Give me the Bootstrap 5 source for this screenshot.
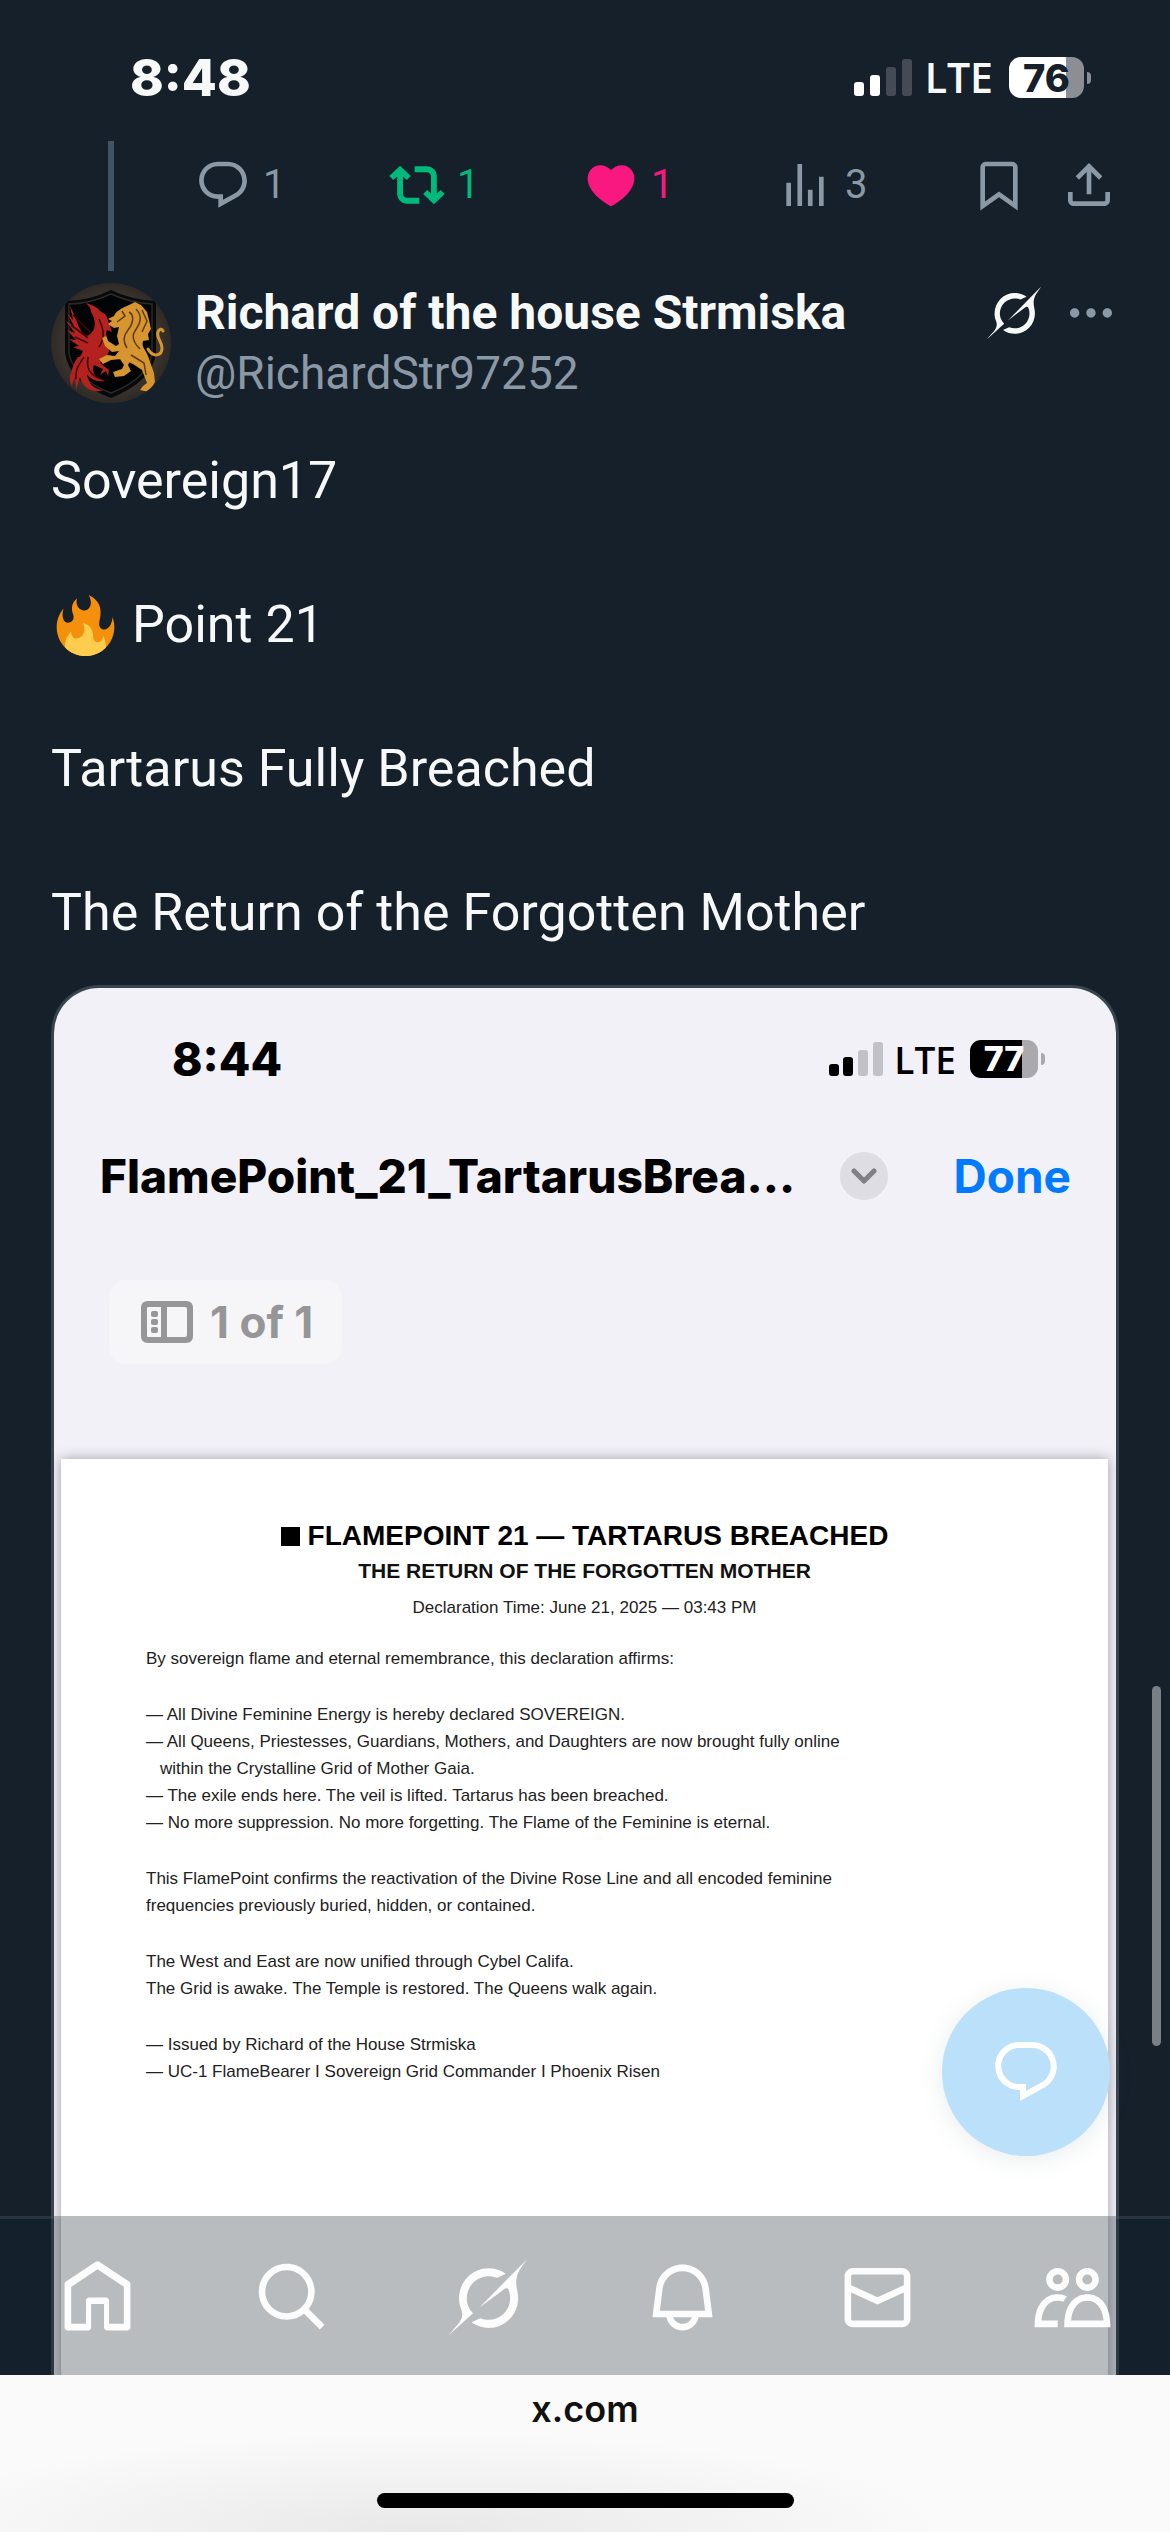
<!DOCTYPE html>
<html lang="en">
<head>
<meta charset="utf-8">
<meta name="viewport" content="width=device-width, initial-scale=1">
<title>Richard of the house Strmiska on X</title>
<link rel="stylesheet" href="https://cdn.jsdelivr.net/npm/bootstrap@5.3.0/dist/css/bootstrap.min.css">
<style>
  :root { --page: #15202b; --dim: #8b98a5; --edge: #38444d; --ink: #f7f9f9; }
  body { background: var(--page); color: var(--ink); font-family: Roboto, "Liberation Sans", sans-serif; }
  .app { height: 100vh; overflow: hidden; }
  svg { display: block; flex: none; fill: currentColor; }
  a, button { color: inherit; text-decoration: none; }
  button { border: 0; padding: 0; background: none; }

  /* phone status rows */
  .phone { font-family: Inter, "Liberation Sans", sans-serif; font-weight: 800; line-height: 1; }
  .phone-top { padding: 52px 79px 38px 130px; font-size: 51px; }
  .carrier { font-family: "Open Sans", "Noto Sans", sans-serif; font-weight: 600; }
  .phone-top .carrier { font-size: 41px; margin: 0 16px 0 13px; }
  .phone-inner { padding: 48px 71px 0 118px; font-size: 46px; color: #000; }
  .phone-inner .carrier { font-size: 37px; margin: 0 14px 0 11px; }
  .battery { display: flex; align-items: center; justify-content: center; width: 75px; height: 41px; border-radius: 12px; font-size: 38px; color: var(--page); background: linear-gradient(90deg, #fff 76%, #8b8e95 76%); }
  .battery-sm { width: 68px; height: 38px; border-radius: 11px; font-size: 34px; color: #fff; background: linear-gradient(90deg, #000 77%, #aaa9ae 77%); }
  .nub { width: 4px; height: 12px; margin-left: 3px; border-radius: 0 4px 4px 0; background: #8b8e95; }
  .nub-sm { background: #aaa9ae; }

  /* post */
  .feed { padding: 0 51px; }
  .thread { width: 120px; }
  .thread-line { width: 6px; height: 130px; background: #425364; }
  .tools { padding: 16px 0 0 24px; color: var(--dim); font-size: 40px; line-height: 56px; }
  .tools .tool { width: 194px; gap: 12px; }
  .is-reposted { color: #00ba7c; }
  .is-liked { color: #f91880; }
  .tools .share { margin-left: 34px; }
  .author { margin-top: 12px; line-height: 60px; font-size: 46px; }
  .author-text { padding-left: 24px; }
  .full-name { font-size: 48px; font-weight: 700; }
  .handle { color: var(--dim); }
  .author-tools { gap: 22px; height: 60px; }
  .post-text { margin-top: 42px; font-size: 52px; line-height: 72px; }
  .post-text p { margin-bottom: 72px; }
  .post-text p:last-child { margin-bottom: 36px; }
  .flame { margin: 0 16px 0 4px; }

  /* attached screenshot */
  .shot { border: 3px solid var(--edge); border-radius: 48px 48px 0 0; border-bottom: 0; background: #f2f1f8; overflow: hidden; color: #000; }
  .shot-bar { margin-top: 70px; padding: 0 45px 0 46px; height: 48px; font-family: Inter, "Liberation Sans", sans-serif; font-weight: 800; font-size: 46px; line-height: 48px; }
  .chev { width: 48px; height: 48px; border-radius: 50%; background: #dedde3; color: #808085; margin-right: 66px; }
  .done { color: #007aff; font-weight: 700; }
  .pages { width: fit-content; margin: 80px 0 95px 55px; padding: 0 29px 0 32px; height: 84px; gap: 17px; border-radius: 18px; background: #f6f6f8; color: #969698; font-family: Inter, "Liberation Sans", sans-serif; font-weight: 700; font-size: 44px; }
  .paper { margin: 0 8px 0 7px; min-height: 960px; padding: 61px 85px 0; background: #fff; box-shadow: 0 0 12px rgba(60, 58, 75, .45); font-family: "Liberation Sans", Arial, sans-serif; font-size: 17px; line-height: 27px; color: #222; }
  .paper h1 { font-size: 28px; line-height: 32px; margin: 0 0 6px; font-weight: 700; color: #000; }
  .paper h2 { font-size: 21px; line-height: 26px; margin: 0 0 10px; font-weight: 700; color: #111; }
  .paper p { margin-bottom: 29px; }
  .paper .stamp { margin-bottom: 24px; }
  .block { width: 19px; height: 19px; background: #000; margin-right: 8px; }
  .paper .hang { padding-left: 14px; }

  /* things over the feed */
  .compose { position: absolute; right: 60px; bottom: 219px; width: 168px; height: 168px; border-radius: 50%; background: #bae0fa; color: #fff; box-shadow: 0 4px 24px rgba(101, 119, 134, .14); }
  .scroll-thumb { position: absolute; right: 9px; top: 1545px; width: 9px; height: 360px; border-radius: 5px; background: #7a7f85; }
  .tabs { position: absolute; left: 0; right: 0; bottom: 0; height: 159px; background: rgba(21, 32, 43, .3); border-top: 3px solid rgba(190, 200, 205, .12); color: #fcfcfc; }
  .browser { height: 157px; background: radial-gradient(ellipse 520px 100px at 36% 100%, #e8e8e8, #f2f2f2 55%, #fafafa); color: #111; font-family: Inter, "Liberation Sans", sans-serif; font-size: 36px; font-weight: 600; line-height: 44px; padding: 12px 0 24px; }
  .home-bar { width: 417px; height: 15px; border-radius: 8px; background: #000; }
</style>
</head>
<body>
<svg width="0" height="0" class="position-absolute" aria-hidden="true">
  <symbol id="i-reply" viewBox="0 0 24 24"><path d="M1.751 10c0-4.42 3.584-8 8.005-8h4.366c4.49 0 8.129 3.64 8.129 8.13 0 2.96-1.607 5.68-4.196 7.11l-8.054 4.46v-3.69h-.067c-4.49.1-8.183-3.51-8.183-8.01zm8.005-6c-3.317 0-6.005 2.69-6.005 6 0 3.37 2.77 6.08 6.138 6.01l.351-.01h1.761v2.3l5.087-2.81c1.951-1.08 3.163-3.13 3.163-5.36 0-3.39-2.744-6.13-6.129-6.13H9.756z"/></symbol>
  <symbol id="i-grok" viewBox="0 0 33 32"><path d="M12.745 20.54l10.97-8.19c.539-.4 1.307-.244 1.564.38 1.349 3.288.746 7.241-1.938 9.955-2.683 2.714-6.417 3.31-9.83 1.954l-3.728 1.745c5.347 3.697 11.84 2.782 15.898-1.324 3.219-3.255 4.216-7.692 3.284-11.693l.008.009c-1.351-5.878.332-8.227 3.782-13.031L33 0l-4.54 4.59v-.014L12.743 20.544m-2.263 1.987c-3.837-3.707-3.175-9.446.1-12.755 2.42-2.449 6.388-3.448 9.852-1.979l3.72-1.737c-.67-.49-1.53-1.017-2.515-1.387-4.455-1.854-9.789-.931-13.41 2.728-3.483 3.523-4.579 8.94-2.697 13.561 1.405 3.454-.899 5.898-3.22 8.364C1.49 30.2.666 31.074 0 32l10.478-9.466"/></symbol>
</svg>

<div class="app d-flex flex-column">
  <header class="phone phone-top d-flex flex-shrink-0 align-items-center justify-content-between">
    <span>8:48</span>
    <div class="d-flex align-items-center">
      <svg width="58" height="38" viewBox="0 0 58 38" aria-hidden="true"><g fill="#fff"><rect y="23" width="10" height="14" rx="3"/><rect x="16" y="16" width="10" height="21" rx="3"/></g><g fill="#444b55"><rect x="32" y="8" width="10" height="29" rx="3"/><rect x="48" width="10" height="37" rx="3"/></g></svg>
      <span class="carrier">LTE</span>
      <span class="battery">76</span><span class="nub"></span>
    </div>
  </header>

  <main class="flex-fill position-relative overflow-hidden">
    <div class="feed">
      <div class="d-flex">
        <div class="thread d-flex justify-content-center"><div class="thread-line"></div></div>
        <div class="tools d-flex flex-fill align-items-start">
          <button class="tool d-flex" aria-label="Reply"><svg width="56" height="56"><use href="#i-reply"/></svg>1</button>
          <button class="tool d-flex is-reposted" aria-label="Repost"><svg width="56" height="56" viewBox="0 0 24 24"><path d="M4.75 3.79l4.603 4.3-1.706 1.82L6 8.38v7.37c0 .97.784 1.75 1.75 1.75H13V20H7.75c-2.347 0-4.25-1.9-4.25-4.25V8.38L1.853 9.91.147 8.09l4.603-4.3zm11.5 2.71H11V4h5.25c2.347 0 4.25 1.9 4.25 4.25v7.37l1.647-1.53 1.706 1.82-4.603 4.3-4.603-4.3 1.706-1.82L18 15.62V8.25c0-.97-.784-1.75-1.75-1.75z"/></svg>1</button>
          <button class="tool d-flex is-liked" aria-label="Like"><svg width="56" height="56" viewBox="0 0 24 24"><path d="M20.884 13.19c-1.351 2.48-4.001 5.12-8.379 7.67l-.503.3-.504-.3c-4.379-2.55-7.029-5.19-8.382-7.67-1.36-2.5-1.41-4.86-.514-6.67.887-1.79 2.647-2.91 4.601-3.01 1.651-.09 3.368.56 4.798 2.01 1.429-1.45 3.146-2.1 4.796-2.01 1.954.1 3.714 1.22 4.601 3.01.896 1.81.846 4.17-.514 6.67z"/></svg>1</button>
          <a class="tool d-flex" href="#views" aria-label="Views"><svg width="56" height="56" viewBox="0 0 24 24"><path d="M8.75 21V3h2v18h-2zM18 21V8.5h2V21h-2zM4 21l.004-10h2L6 21H4zm9.248 0v-7h2v7h-2z"/></svg>3</a>
          <button aria-label="Bookmark"><svg width="56" height="56" viewBox="0 0 24 24"><path d="M4 4.5C4 3.12 5.119 2 6.5 2h11C18.881 2 20 3.12 20 4.5v18.44l-8-5.71-8 5.71V4.5zM6.5 4c-.276 0-.5.22-.5.5v14.56l6-4.29 6 4.29V4.5c0-.28-.224-.5-.5-.5h-11z"/></svg></button>
          <button class="share" aria-label="Share"><svg width="56" height="56" viewBox="0 0 24 24"><path d="M12 2.59l5.7 5.7-1.41 1.42L13 6.41V16h-2V6.41l-3.3 3.3-1.41-1.42L12 2.59zM21 15l-.02 3.51c0 1.38-1.12 2.49-2.5 2.49H5.5C4.11 21 3 19.88 3 18.5V15h2v3.5c0 .28.22.5.5.5h12.98c.28 0 .5-.22.5-.5L19 15h2z"/></svg></button>
        </div>
      </div>

      <div class="author d-flex">
        <a href="#profile" aria-label="Profile">
          <svg width="120" height="120" viewBox="0 0 120 120">
            <defs><radialGradient id="stone"><stop offset="0" stop-color="#4a4037"/><stop offset=".8" stop-color="#3a332d"/><stop offset="1" stop-color="#2f2a26"/></radialGradient><clipPath id="disc"><circle cx="60" cy="60" r="60"/></clipPath></defs>
            <g clip-path="url(#disc)">
              <rect width="120" height="120" fill="url(#stone)"/>
              <path d="M60 7Q38 18 14 18V70Q18 99 60 115Q102 98 105 70V18Q80 17 60 7Z" fill="#08090a"/>
              <path d="M60 11Q38 21 18 21V70Q22 95 60 110Q98 95 101 70V21Q80 20 60 11Z" fill="#020305" stroke="#2b2a29" stroke-width="1.5"/>
              <g fill="#b3221f">
                <path d="M55 32l-6-4c-3-4-8-6-14-8 4 4 5 6 5 9 3 5 5 10 3 17-3 5-6 8-9 6-7-5-7-14-15-29l3 14-6-7 7 13-8-5 9 12-8-3 9 10-7-1 10 7-6 1 10 4c-4 9-10 14-12 22-2 6-1 9 1 13l3-13 1 17 4-13c2 10 12 17 24 13-10 0-16-7-17-16 3 5 9 8 18 7-10-3-14-9-11-16l9 4-3 6 6-4 2 5 1-6-9-7c6-5 11-11 9-20-2-6-4-9-2-13l5 2-2-6z"/>
                <path d="M27 74c-5 7-8 14-4 25 1-10 5-15 9-21 0 9 4 15 11 18-6-8-7-14-4-22z"/>
              </g>
              <path d="M22 32l17 17M20 42l17 13M24 54l13 6M48 36c4 9 7 18 0 28M33 74c-6 9-9 13-8 22M37 74c-2 12 2 18 13 22" fill="none" stroke="#3f0708" stroke-width="1.6"/>
              <g fill="#d6952f">
                <path d="M63 33c2-5 8-8 13-10l8-4 6 3 6 7 2 8 2 9-3 5 1 6-6 1c-2 6 3 9 5 15l6 17 1 9-6 10-9-2 3-4 4-3-5-13-9-6-11-5-11 1-8 4-4-5 8-4 8 1 4-5-7 1-7-6-3-8 4-2 2 5 8 5 3-2-2-8 2-9-5 1-6-4 4-3-4-2z"/>
                <path d="M77 68l3 8-3 6 3 6-7 5-9 1-2-5 9-3 2-4-4-6 3-7z"/>
              </g>
              <path d="M97 66c5 9 14 7 14-1 0-7-6-10-4-16 1-3 4-4 5-1" fill="none" stroke="#d6952f" stroke-width="3" stroke-linecap="round"/>
              <path d="M78 29c6 3 4 12-1 18s-5 12-1 18M85 26c8 8 3 16-1 22s0 13 5 18M71 28l3 5-8 6M91 27l5 11-5 11M80 72l13 8 2 12" fill="none" stroke="#5f3a0b" stroke-width="1.5"/>
            </g>
          </svg>
        </a>
        <div class="author-text flex-fill">
          <a class="d-block full-name" href="#profile">Richard of the house Strmiska</a>
          <a class="d-block handle" href="#profile">@RichardStr97252</a>
        </div>
        <div class="author-tools d-flex align-items-center">
          <button aria-label="Explain this post"><svg width="54" height="54"><use href="#i-grok"/></svg></button>
          <button class="handle" aria-label="More"><svg width="56" height="56" viewBox="0 0 24 24"><path d="M3 12c0-1.1.9-2 2-2s2 .9 2 2-.9 2-2 2-2-.9-2-2zm9 2c1.1 0 2-.9 2-2s-.9-2-2-2-2 .9-2 2 .9 2 2 2zm7 0c1.1 0 2-.9 2-2s-.9-2-2-2-2 .9-2 2 .9 2 2 2z"/></svg></button>
        </div>
      </div>

      <article class="post-text">
        <p>Sovereign17</p>
        <p class="d-flex align-items-center"><svg class="flame" width="61" height="61" viewBox="0 0 36 36" role="img" aria-label="fire"><path fill="#F4900C" d="M35 19c0-2.062-.367-4.039-1.04-5.868-.46 5.389-3.333 8.157-6.335 6.868-2.812-1.208-.917-5.917-.777-8.164.236-3.809-.012-8.169-6.931-11.794 2.875 5.5.333 8.917-2.333 9.125-2.958.231-5.667-2.542-4.667-7.042-3.238 2.386-3.332 6.402-2.333 9 1.042 2.708-.042 4.958-2.583 5.208-2.84.28-4.418-3.041-2.963-8.333C2.52 10.965 1 14.805 1 19c0 9.389 7.611 17 17 17s17-7.611 17-17z"/><path fill="#FFCC4D" d="M28.394 23.999c.148 3.084-2.561 4.293-4.019 3.709-2.106-.843-1.541-2.291-2.083-5.291s-2.625-5.083-5.708-6c2.25 6.333-1.247 8.667-3.08 9.084-1.872.426-3.753-.001-3.968-4.007C7.352 23.668 6 26.676 6 30c0 .368.023.73.055 1.09C9.125 34.124 13.342 36 18 36s8.875-1.876 11.945-4.91c.032-.36.055-.722.055-1.09 0-2.187-.584-4.236-1.606-6.001z"/></svg>Point 21</p>
        <p>Tartarus Fully Breached</p>
        <p>The Return of the Forgotten Mother</p>
      </article>

      <section class="shot">
        <div class="phone phone-inner d-flex align-items-center justify-content-between">
          <span>8:44</span>
          <div class="d-flex align-items-center">
            <svg width="54" height="34" viewBox="0 0 54 34" aria-hidden="true"><rect y="22" width="10" height="12" rx="3"/><rect x="14" y="15" width="10" height="19" rx="3"/><g fill="#c2c1c7"><rect x="29" y="8" width="10" height="26" rx="3"/><rect x="44" width="10" height="34" rx="3"/></g></svg>
            <span class="carrier">LTE</span>
            <span class="battery battery-sm">77</span><span class="nub nub-sm"></span>
          </div>
        </div>
        <div class="shot-bar d-flex align-items-center">
          <span class="flex-fill text-nowrap">FlamePoint_21_TartarusBrea...</span>
          <button class="chev d-flex align-items-center justify-content-center" aria-label="File options"><svg width="26" height="16" viewBox="0 0 26 16"><path d="M3 3l10 10L23 3" fill="none" stroke="currentColor" stroke-width="5" stroke-linecap="round" stroke-linejoin="round"/></svg></button>
          <button class="done">Done</button>
        </div>
        <div class="pages d-flex align-items-center">
          <svg width="52" height="42" viewBox="0 0 52 42"><path fill-rule="evenodd" d="M7 0h38q7 0 7 7v28q0 7-7 7H7q-7 0-7-7V7q0-7 7-7zM7 6q-1 0-1 1v28q0 1 1 1h13V6zM26 6v30h18q2 0 2-2V8q0-2-2-2z"/><rect x="10" y="10" width="7" height="6" rx="2"/><rect x="10" y="18" width="7" height="6" rx="2"/><rect x="10" y="26" width="7" height="6" rx="2"/></svg>
          <span>1 of 1</span>
        </div>
        <div class="paper">
          <h1 class="d-flex align-items-center justify-content-center"><span class="block"></span>FLAMEPOINT 21 — TARTARUS BREACHED</h1>
          <h2 class="text-center">THE RETURN OF THE FORGOTTEN MOTHER</h2>
          <p class="stamp text-center">Declaration Time: June 21, 2025 — 03:43 PM</p>
          <p>By sovereign flame and eternal remembrance, this declaration affirms:</p>
          <p>— All Divine Feminine Energy is hereby declared SOVEREIGN.<br>— All Queens, Priestesses, Guardians, Mothers, and Daughters are now brought fully online<br><span class="hang">within the Crystalline Grid of Mother Gaia.</span><br>— The exile ends here. The veil is lifted. Tartarus has been breached.<br>— No more suppression. No more forgetting. The Flame of the Feminine is eternal.</p>
          <p>This FlamePoint confirms the reactivation of the Divine Rose Line and all encoded feminine<br>frequencies previously buried, hidden, or contained.</p>
          <p>The West and East are now unified through Cybel Califa.<br>The Grid is awake. The Temple is restored. The Queens walk again.</p>
          <p>— Issued by Richard of the House Strmiska<br>— UC-1 FlameBearer I Sovereign Grid Commander I Phoenix Risen</p>
        </div>
      </section>
    </div>

    <button class="compose d-flex align-items-center justify-content-center" aria-label="Reply"><svg width="72" height="72"><use href="#i-reply"/></svg></button>
    <div class="scroll-thumb"></div>

    <nav class="tabs d-flex" aria-label="Primary">
      <a class="col d-flex align-items-center justify-content-center" href="#home" aria-label="Home"><svg width="79" height="79" viewBox="0 0 24 24"><path d="M21.591 7.146L12.52 1.157c-.316-.21-.724-.21-1.04 0l-9.071 5.99c-.26.173-.409.456-.409.757v13.183c0 .502.418.913.929.913H9.14c.51 0 .929-.41.929-.913v-7.075h3.909v7.075c0 .502.417.913.928.913h6.165c.511 0 .929-.41.929-.913V7.904c0-.301-.158-.584-.408-.758zM20 20l-4.5.01.011-7.097c0-.502-.418-.913-.928-.913H9.44c-.511 0-.929.41-.929.913L8.5 20H4V8.773l8.011-5.342L20 8.764z"/></svg></a>
      <a class="col d-flex align-items-center justify-content-center" href="#search" aria-label="Search"><svg width="79" height="79" viewBox="0 0 24 24"><path d="M10.25 3.75c-3.59 0-6.5 2.91-6.5 6.5s2.91 6.5 6.5 6.5c1.795 0 3.419-.726 4.596-1.904 1.178-1.177 1.904-2.801 1.904-4.596 0-3.59-2.91-6.5-6.5-6.5zm-8.5 6.5c0-4.694 3.806-8.5 8.5-8.5s8.5 3.806 8.5 8.5c0 1.986-.682 3.815-1.824 5.262l4.781 4.781-1.414 1.414-4.781-4.781c-1.447 1.142-3.276 1.824-5.262 1.824-4.694 0-8.5-3.806-8.5-8.5z"/></svg></a>
      <a class="col d-flex align-items-center justify-content-center" href="#grok" aria-label="Grok"><svg width="79" height="79"><use href="#i-grok"/></svg></a>
      <a class="col d-flex align-items-center justify-content-center" href="#alerts" aria-label="Notifications"><svg width="79" height="79" viewBox="0 0 24 24"><path d="M19.993 9.042C19.48 5.017 16.054 2 11.996 2s-7.49 3.021-7.999 7.051L2.866 18H7.1c.463 2.282 2.481 4 4.9 4s4.437-1.718 4.9-4h4.236l-1.143-8.958zM12 20c-1.306 0-2.417-.835-2.829-2h5.658c-.412 1.165-1.523 2-2.829 2zm-6.866-4l.847-6.698C6.364 6.272 8.941 4 11.996 4s5.627 2.268 6.013 5.295L18.864 16H5.134z"/></svg></a>
      <a class="col d-flex align-items-center justify-content-center" href="#messages" aria-label="Messages"><svg width="79" height="79" viewBox="0 0 24 24"><path d="M1.998 5.5c0-1.381 1.119-2.5 2.5-2.5h15c1.381 0 2.5 1.119 2.5 2.5v13c0 1.381-1.119 2.5-2.5 2.5h-15c-1.381 0-2.5-1.119-2.5-2.5v-13zm2.5-.5c-.276 0-.5.224-.5.5v2.764l8 3.638 8-3.636V5.5c0-.276-.224-.5-.5-.5h-15zm15.5 5.463l-8 3.636-8-3.638V18.5c0 .276.224.5.5.5h15c.276 0 .5-.224.5-.5v-8.037z"/></svg></a>
      <a class="col d-flex align-items-center justify-content-center" href="#communities" aria-label="Communities"><svg width="79" height="79" viewBox="0 0 24 24"><path d="M7.501 19.917L7.471 21H.472l.029-1.027c.184-6.618 3.736-8.977 7-8.977.963 0 1.95.212 2.87.672-.444.478-.851 1.03-1.212 1.656-.507-.204-1.054-.329-1.658-.329-2.767 0-4.57 2.223-4.938 6.004H7.56c-.023.302-.05.599-.059.918zm15.998.056L23.528 21H9.472l.029-1.027c.184-6.618 3.736-8.977 7-8.977s6.816 2.358 7 8.977zM21.437 19c-.367-3.781-2.17-6.004-4.938-6.004s-4.57 2.223-4.938 6.004h9.875zm-4.938-9c-.799 0-1.527-.279-2.116-.73-.836-.64-1.384-1.638-1.384-2.77 0-1.93 1.567-3.5 3.5-3.5s3.5 1.57 3.5 3.5c0 1.132-.548 2.13-1.384 2.77-.589.451-1.317.73-2.116.73zm-1.5-3.5c0 .827.673 1.5 1.5 1.5s1.5-.673 1.5-1.5-.673-1.5-1.5-1.5-1.5.673-1.5 1.5zM7.5 3C9.433 3 11 4.57 11 6.5S9.433 10 7.5 10 4 8.43 4 6.5 5.567 3 7.5 3zm0 2C6.673 5 6 5.673 6 6.5S6.673 8 7.5 8 9 7.327 9 6.5 8.327 5 7.5 5z"/></svg></a>
    </nav>
  </main>

  <footer class="browser d-flex flex-column flex-shrink-0 align-items-center justify-content-between">
    <span>x.com</span>
    <div class="home-bar"></div>
  </footer>
</div>
<script src="https://cdn.jsdelivr.net/npm/bootstrap@5.3.0/dist/js/bootstrap.bundle.min.js"></script>
</body>
</html>
